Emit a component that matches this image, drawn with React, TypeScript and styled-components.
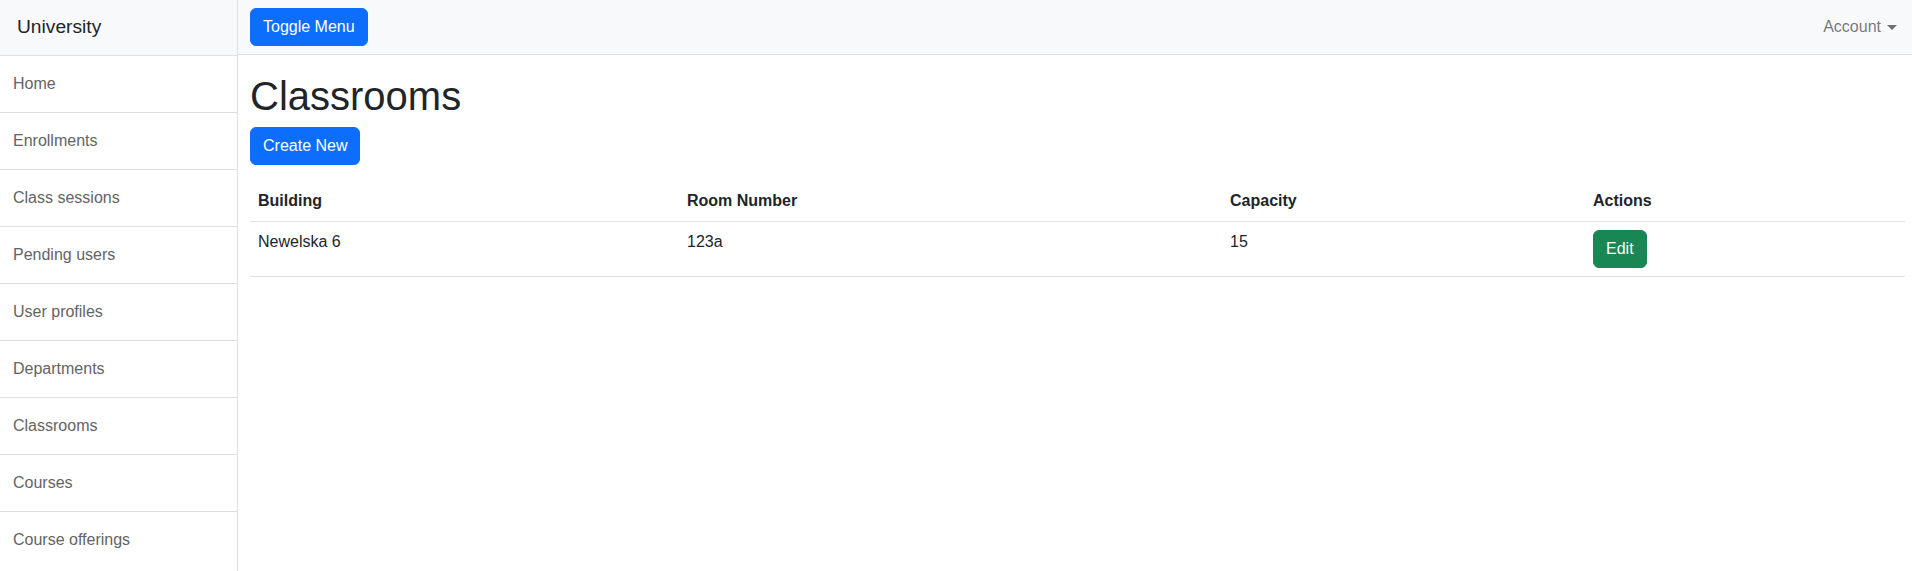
import React from "react";
import styled, { createGlobalStyle } from "styled-components";

const GlobalStyle = createGlobalStyle`
  * { box-sizing: border-box; }
  html, body { margin: 0; padding: 0; overflow: hidden; }
  body {
    font-family: "Liberation Sans", Arial, Helvetica, sans-serif;
    font-size: 16px;
    line-height: 1.5;
    color: #212529;
    background: #fff;
  }
`;

const Wrapper = styled.div`
  display: flex;
  width: 100%;
  min-height: 571px;
`;

const Sidebar = styled.aside`
  width: 238px;
  flex: 0 0 238px;
  border-right: 1px solid #dee2e6;
  background: #fff;
  display: flex;
  flex-direction: column;
`;

const SidebarHeading = styled.div`
  height: 56px;
  padding: 0 17px;
  display: flex;
  align-items: center;
  font-size: 19.2px;
  color: #212529;
  background: #f8f9fa;
  border-bottom: 1px solid #dee2e6;
`;

const NavList = styled.nav`
  display: flex;
  flex-direction: column;
`;

const NavItem = styled.a`
  display: block;
  height: 57px;
  padding: 16px 13px;
  font-size: 16px;
  line-height: 24px;
  color: #636464;
  text-decoration: none;
  border-bottom: 1px solid #dfdfdf;
  &:last-child { border-bottom: 0; }
`;

const Main = styled.div`
  flex: 1;
  min-width: 0;
  display: flex;
  flex-direction: column;
`;

const TopBar = styled.header`
  height: 55px;
  padding: 0 7px 0 12px;
  display: flex;
  align-items: center;
  justify-content: space-between;
  background: #f8f9fa;
  border-bottom: 1px solid #dee2e6;
`;

const Button = styled.button<{ $variant?: "primary" | "success" }>`
  font-family: inherit;
  font-size: 16px;
  line-height: 24px;
  padding: 6px 12px;
  border: 1px solid ${(p) => (p.$variant === "success" ? "#198754" : "#0d6efd")};
  background: ${(p) => (p.$variant === "success" ? "#198754" : "#0d6efd")};
  color: #fff;
  border-radius: 6px;
  cursor: pointer;
`;

const AccountLink = styled.a`
  display: flex;
  align-items: center;
  padding: 8px 8px;
  color: rgba(0, 0, 0, 0.55);
  text-decoration: none;
  font-size: 16px;
  line-height: 24px;
`;

const Caret = styled.span`
  display: inline-block;
  margin-left: 6px;
  margin-top: 1px;
  width: 0;
  height: 0;
  border-top: 5px solid rgba(0, 0, 0, 0.55);
  border-left: 5px solid transparent;
  border-right: 5px solid transparent;
`;

const Content = styled.main`
  padding: 0 7px 0 12px;
  display: flex;
  flex-direction: column;
  align-items: flex-start;
`;

const Title = styled.h1`
  margin: 17px 0 7px;
  font-size: 40px;
  font-weight: 500;
  line-height: 48px;
  color: #212529;
`;

const Table = styled.table`
  margin-top: 16px;
  align-self: stretch;
  width: 100%;
  border-collapse: collapse;
  color: #212529;
`;

const Th = styled.th<{ $w?: number }>`
  text-align: left;
  font-weight: 700;
  padding: 8px;
  line-height: 24px;
  border-bottom: 1px solid #dee2e6;
  vertical-align: bottom;
  width: ${(p) => (p.$w ? `${p.$w}px` : "auto")};
`;

const Td = styled.td`
  padding: 8px;
  line-height: 24px;
  vertical-align: top;
  border-bottom: 1px solid #dee2e6;
`;

const navItems = [
  "Home",
  "Enrollments",
  "Class sessions",
  "Pending users",
  "User profiles",
  "Departments",
  "Classrooms",
  "Courses",
  "Course offerings",
];

export default function App() {
  return (
    <>
      <GlobalStyle />
      <Wrapper>
        <Sidebar>
          <SidebarHeading>University</SidebarHeading>
          <NavList>
            {navItems.map((n) => (
              <NavItem key={n} href="#">
                {n}
              </NavItem>
            ))}
          </NavList>
        </Sidebar>
        <Main>
          <TopBar>
            <Button>Toggle Menu</Button>
            <AccountLink href="#">
              Account
              <Caret />
            </AccountLink>
          </TopBar>
          <Content>
            <Title>Classrooms</Title>
            <Button>Create New</Button>
            <Table>
              <thead>
                <tr>
                  <Th $w={429}>Building</Th>
                  <Th $w={543}>Room Number</Th>
                  <Th $w={363}>Capacity</Th>
                  <Th>Actions</Th>
                </tr>
              </thead>
              <tbody>
                <tr>
                  <Td>Newelska 6</Td>
                  <Td>123a</Td>
                  <Td>15</Td>
                  <Td>
                    <Button $variant="success">Edit</Button>
                  </Td>
                </tr>
              </tbody>
            </Table>
          </Content>
        </Main>
      </Wrapper>
    </>
  );
}
